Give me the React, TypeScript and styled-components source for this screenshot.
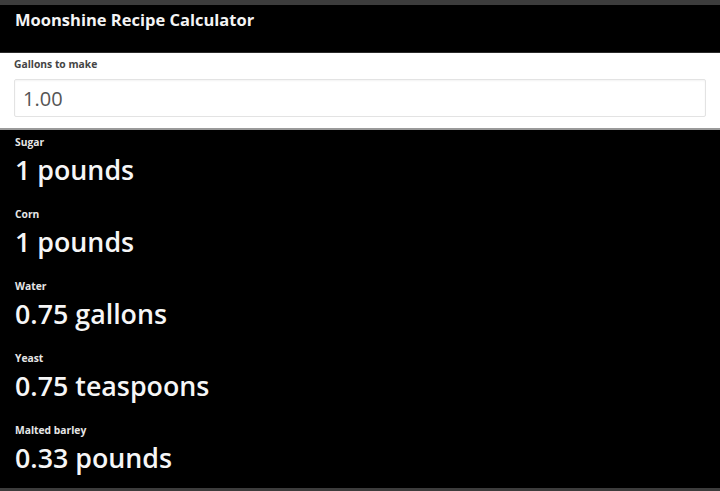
import React from "react";
import styled, { createGlobalStyle } from "styled-components";

const GlobalStyle = createGlobalStyle`
  html, body {
    margin: 0;
    padding: 0;
    background: #3c3c3c;
  }
  * { box-sizing: border-box; }
`;

const Frame = styled.div`
  height: 491px;
  padding: 5px 0 3px;
  background: #3c3c3c;
  font-family: "Open Sans", "Noto Sans", sans-serif;
  display: flex;
  flex-direction: column;
  overflow: hidden;
`;

const Header = styled.header`
  background: #000;
  color: #f4f4f4;
  padding: 5px 15px 22px;
  font-size: 16.5px;
  line-height: 20px;
  font-weight: 700;
  border-bottom: 1px solid #2a2a2a;
`;

const InputPanel = styled.section`
  background: #fff;
  padding: 5px 14px 11px;
  border-bottom: 2px solid #9a9a9a;
`;

const FieldLabel = styled.label`
  display: block;
  font-size: 10.3px;
  line-height: 12px;
  font-weight: 700;
  color: #444;
  margin-bottom: 9px;
`;

const Field = styled.input`
  display: block;
  width: 100%;
  height: 38px;
  padding: 0 8px;
  border: 1px solid #e3e3e3;
  border-radius: 2px;
  box-shadow: inset 0 1px 2px rgba(0, 0, 0, 0.05);
  font-family: inherit;
  font-size: 20px;
  color: #555;
  outline: none;
`;

const Results = styled.div`
  flex: 1;
  background: #000;
  padding: 6px 15px 0;
  display: flex;
  flex-direction: column;
  gap: 20px;
`;

const Item = styled.div`
  display: flex;
  flex-direction: column;
  gap: 4px;
`;

const ItemLabel = styled.div`
  font-size: 10.3px;
  line-height: 12px;
  font-weight: 700;
  color: #e6e6e6;
`;

const ItemValue = styled.div`
  font-size: 26.8px;
  line-height: 36px;
  font-weight: 600;
  color: #f6f6f6;
`;

const ingredients = [
  { name: "Sugar", perGallon: 1, unit: "pounds", digits: 0 },
  { name: "Corn", perGallon: 1, unit: "pounds", digits: 0 },
  { name: "Water", perGallon: 0.75, unit: "gallons", digits: 2 },
  { name: "Yeast", perGallon: 0.75, unit: "teaspoons", digits: 2 },
  { name: "Malted barley", perGallon: 0.33, unit: "pounds", digits: 2 },
];

export default function App() {
  const [gallons, setGallons] = React.useState("1.00");
  const amount = parseFloat(gallons) || 0;

  return (
    <>
      <GlobalStyle />
      <Frame>
        <Header>Moonshine Recipe Calculator</Header>
        <InputPanel>
          <FieldLabel htmlFor="gallons">Gallons to make</FieldLabel>
          <Field
            id="gallons"
            value={gallons}
            onChange={(e) => setGallons(e.target.value)}
          />
        </InputPanel>
        <Results>
          {ingredients.map((ing) => (
            <Item key={ing.name}>
              <ItemLabel>{ing.name}</ItemLabel>
              <ItemValue>
                {(ing.perGallon * amount).toFixed(ing.digits)} {ing.unit}
              </ItemValue>
            </Item>
          ))}
        </Results>
      </Frame>
    </>
  );
}
